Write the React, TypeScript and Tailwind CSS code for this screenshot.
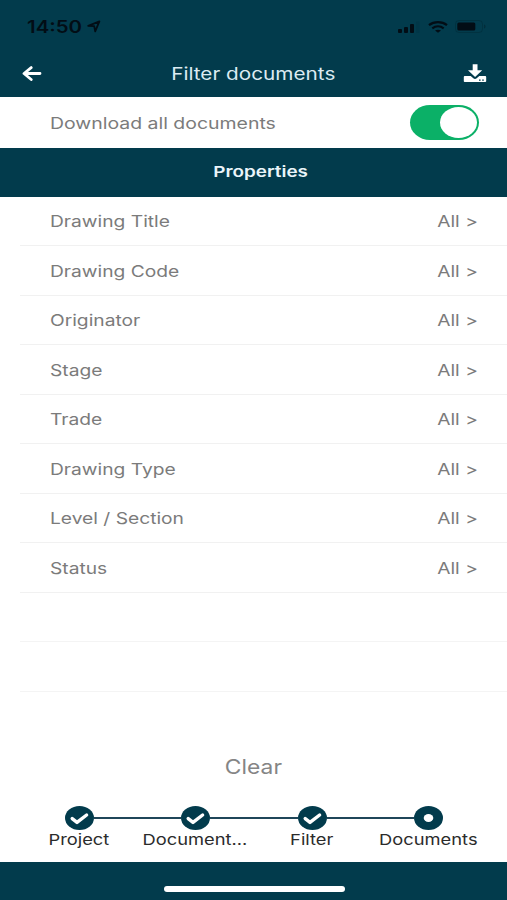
import type { ReactNode } from 'react';
import { clsx } from 'clsx';

const PROPERTIES = [
  'Drawing Title',
  'Drawing Code',
  'Originator',
  'Stage',
  'Trade',
  'Drawing Type',
  'Level / Section',
  'Status',
];

const STEPS = [
  { label: 'Project', done: true },
  { label: 'Document...', done: true },
  { label: 'Filter', done: true },
  { label: 'Documents', done: false },
];

// Extended-width lettering used across the app
function Wide({ children, className }: { children: ReactNode; className: string }) {
  return <span className={clsx('inline-block whitespace-nowrap', className)}>{children}</span>;
}

function StatusBar() {
  return (
    <div className="flex h-[50px] items-center justify-between pt-[3px] pr-[20px] pl-[27px] text-[#020d15]">
      <div className="flex items-center">
        <div className="w-[60px] text-[17px] leading-5 font-semibold">
          <Wide className="origin-left scale-x-[1.2]">14:50</Wide>
        </div>
        <svg width="15" height="13" viewBox="0 0 15 13" fill="none" stroke="currentColor" strokeWidth="1.8" strokeLinejoin="round">
          <path d="M1.2 5.8 12.4 1.4 8.2 11.4 7.2 6.2Z" />
        </svg>
      </div>
      <div className="flex items-center gap-[7px]">
        <svg width="24" height="12" viewBox="0 0 24 12" fill="currentColor">
          <rect x="1" y="8" width="4" height="4" rx="1" />
          <rect x="7" y="6" width="4" height="6" rx="1" />
          <rect x="13" y="3" width="4" height="9" rx="1" />
          <rect x="19" y="0.5" width="3.5" height="11.5" rx="1" opacity="0.08" />
        </svg>
        <svg width="20" height="12" viewBox="0 0 20 12" fill="none" stroke="currentColor" strokeWidth="2.2">
          <path d="M1 4.2C6 .1 14 .1 19 4.2" />
          <path d="M4.3 7.4c3.4-2.6 8-2.6 11.4 0" />
          <path d="M10 11.8 7 9.6c1.7-1.3 4.3-1.3 6 0Z" fill="currentColor" stroke="none" />
        </svg>
        <svg width="32" height="13" viewBox="0 0 32 13" fill="currentColor">
          <rect x="0.5" y="0.5" width="27" height="12" rx="3.5" fill="none" stroke="currentColor" opacity="0.2" />
          <rect x="2.3" y="2.5" width="18" height="8" rx="1.5" />
          <path d="M29 4.5c2 .6 2 3.4 0 4Z" opacity="0.3" />
        </svg>
      </div>
    </div>
  );
}

function NavBar() {
  return (
    <div className="grid h-[47px] grid-cols-[1fr_auto_1fr] items-center pr-[20px] pl-[22px] text-white">
      <svg width="20" height="16" viewBox="0 0 20 16" fill="none" stroke="currentColor" strokeWidth="2.8" strokeLinecap="round" strokeLinejoin="round">
        <path d="M9.2 1.6 2 7.5l7.2 6M2.4 7.5h15.6" />
      </svg>
      <h1 className="pr-[2px] text-[17px] leading-6 text-[#dcebf2]">
        <Wide className="scale-x-[1.22]">Filter documents</Wide>
      </h1>
      <svg className="justify-self-end" width="24" height="19" viewBox="0 0 24 19" fill="currentColor">
        <path d="M9.7.2h4.8v6h4.7L12.1 13 5 6.2h4.7Z" />
        <path fillRule="evenodd" d="M2 12h5.7l2.6 2.3c1 .8 2.4.8 3.4 0L16.3 12H22c.7 0 1.2.5 1.2 1.1V17c0 .6-.5 1.1-1.2 1.1H2c-.7 0-1.2-.5-1.2-1.1v-3.9C.8 12.5 1.3 12 2 12Zm14 3.5v1.2h1.6v-1.2Zm3.2 0v1.2h1.6v-1.2Z" />
      </svg>
    </div>
  );
}

function Toggle() {
  return (
    <button role="switch" aria-checked="true" className="flex h-[35px] w-[69px] items-center justify-end rounded-[20px/17.5px] bg-[#0bb067] pr-[2px]">
      <span className="h-[31px] w-[37px] rounded-[50%] bg-white" />
    </button>
  );
}

function StepDot({ done }: { done: boolean }) {
  return (
    <svg className="shrink-0" width="29" height="24" viewBox="0 0 29 24">
      <ellipse cx="14.5" cy="12" rx="14.5" ry="12" fill="#023b4c" />
      {done ? (
        <path d="M7.2 12.6 12 16.4 21.6 9" fill="none" stroke="#fff" strokeWidth="3.4" strokeLinecap="round" strokeLinejoin="round" />
      ) : (
        <ellipse cx="14.5" cy="12" rx="4.8" ry="4" fill="#fff" />
      )}
    </svg>
  );
}

function Stepper() {
  return (
    <div>
      <div className="flex items-center pr-[64px] pl-[65px]">
        {STEPS.map((step, i) => (
          <div key={step.label} className={clsx('flex items-center', i > 0 && 'flex-1')}>
            {i > 0 && <div className="h-[2px] flex-1 bg-[#1f4659]" />}
            <StepDot done={step.done} />
          </div>
        ))}
      </div>
      <div className="grid grid-cols-4 px-[20.5px] text-center text-[15px] leading-5 text-[#2b2b2b]">
        {STEPS.map((step) => (
          <div key={step.label}>
            <Wide className="scale-x-[1.22]">{step.label}</Wide>
          </div>
        ))}
      </div>
    </div>
  );
}

export default function App() {
  return (
    <div className="flex h-[900px] w-[507px] flex-col overflow-hidden bg-white font-['Inter','Liberation_Sans',sans-serif] text-[#7b7b7b]">
      <header className="bg-[#023b4c]">
        <StatusBar />
        <NavBar />
      </header>

      <div className="flex h-[51px] items-center justify-between pr-[28px] pl-[49.5px] text-[16px]">
        <Wide className="origin-left scale-x-[1.215]">Download all documents</Wide>
        <Toggle />
      </div>

      <h2 className="flex h-[48.5px] items-center justify-center bg-[#023b4c] pl-[14px] text-[15px] font-semibold text-[#eaf5fa]">
        <Wide className="scale-x-[1.26]">Properties</Wide>
      </h2>

      <ul className="text-[16px]">
        {PROPERTIES.map((name) => (
          <li key={name} className="ml-[20px] flex h-[49.5px] items-center justify-between border-b border-[#f1f1f1] pt-[1px] pr-[29px] pl-[29.5px]">
            <Wide className="origin-left scale-x-[1.2]">{name}</Wide>
            <Wide className="origin-right scale-x-[1.2]">All &gt;</Wide>
          </li>
        ))}
        <li className="ml-[20px] h-[49.5px] border-b border-[#f4f4f4]" />
        <li className="ml-[20px] h-[49.5px] border-b border-[#f4f4f4]" />
      </ul>

      <div className="flex flex-1 flex-col justify-end pb-[12px]">
        <button className="mb-[25px] text-[19.5px] leading-7 text-[#858585]">
          <Wide className="scale-x-[1.17]">Clear</Wide>
        </button>
        <Stepper />
      </div>

      <footer className="flex h-[38px] items-end justify-center bg-[#023b4c] pb-[8px] pl-[1px]">
        <div className="h-[6px] w-[181px] rounded-full bg-white" />
      </footer>
    </div>
  );
}
